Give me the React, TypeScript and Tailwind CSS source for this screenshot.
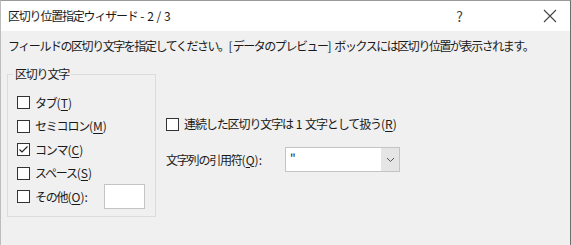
import React from "react";

const font = { fontFamily: '"Noto Sans CJK JP", "Noto Sans", sans-serif' };

const Box = ({ checked = false }: { checked?: boolean }) => (
	<span className="flex h-[13px] w-[13px] shrink-0 items-center justify-center border border-[#333333] bg-white">
		{checked && (
			<svg width="11" height="11" viewBox="0 0 11 11">
				<polyline points="1.5,5.5 4,8 9.5,2.5" fill="none" stroke="#222" strokeWidth="1.2" />
			</svg>
		)}
	</span>
);

// access key in parens, underlined letter
const Key = ({ k }: { k: string }) => (
	<span className="tracking-normal">
		(<span className="underline underline-offset-2">{k}</span>)
	</span>
);

const Check = ({ label, keyChar, checked }: { label: string; keyChar: string; checked?: boolean }) => (
	<div className="flex h-[23.5px] items-center gap-[5px]">
		<Box checked={checked} />
		<span>
			{label}
			<Key k={keyChar} />
		</span>
	</div>
);

export default function App() {
	return (
		<div
			className="flex h-[245px] w-[571px] flex-col border-l border-r border-t border-l-[#bdbdbd] border-r-[#707070] border-t-[#9a9a9a] bg-[#f0f0f0] text-[12px] tracking-[-1.2px] text-[#1a1a1a]"
			style={font}
		>
			<div className="flex h-[30px] shrink-0 items-center bg-white pl-[7px]">
				<span className="flex-1">
					区切り位置指定ウィザード<span className="tracking-normal"> - 2 / 3</span>
				</span>
				<span className="w-[20px] text-center text-[14px] text-[#444]">?</span>
				<span className="ml-[73px] mr-[12px] flex w-[16px] justify-center">
					<svg width="14" height="14" viewBox="0 0 14 14">
						<path d="M1 1 L13 13 M13 1 L1 13" stroke="#444" strokeWidth="1.1" />
					</svg>
				</span>
			</div>

			<div className="pl-[7px] pt-[7px] leading-[16px] tracking-[-1.45px]">
				フィールドの区切り文字を指定してください。<span className="tracking-normal">[</span>データのプレビュー
				<span className="tracking-normal">] </span>ボックスには区切り位置が表示されます。
			</div>

			<div className="flex pl-[6px] pt-[13px]">
				<fieldset className="h-[150px] w-[149px] shrink-0 border border-[#dcdcdc] pl-[9px] pt-[10px]">
					<legend className="-ml-[4px] px-[2px] leading-[14px]">区切り文字</legend>
					<Check label="タブ" keyChar="T" />
					<Check label="セミコロン" keyChar="M" />
					<Check label="コンマ" keyChar="C" checked />
					<Check label="スペース" keyChar="S" />
					<div className="flex h-[23.5px] items-center gap-[5px]">
						<Box />
						<span>
							その他<Key k="O" />:
						</span>
						<span className="ml-[12px] h-[25px] w-[41px] border border-[#c4c4c4] bg-white" />
					</div>
				</fieldset>

				<div className="ml-[10px] flex flex-col pt-[48px]">
					<div className="flex items-center gap-[5px] tracking-[-1.1px]">
						<Box />
						<span>
							連続した区切り文字は<span className="tracking-normal"> 1 </span>文字として扱う
							<Key k="R" />
						</span>
					</div>
					<div className="mt-[14px] flex items-center">
						<span className="w-[119px]">
							文字列の引用符<Key k="Q" />:
						</span>
						<div className="flex h-[25px] w-[115px] border border-[#c4c4c4] bg-white">
							<span className="flex-1 pl-[4px] leading-[20px]">"</span>
							<span className="flex w-[18px] items-center justify-center bg-[#e5e5e5]">
								<svg width="9" height="6" viewBox="0 0 9 6">
									<polyline points="1,1 4.5,4.5 8,1" fill="none" stroke="#555" strokeWidth="1" />
								</svg>
							</span>
						</div>
					</div>
				</div>
			</div>
		</div>
	);
}
